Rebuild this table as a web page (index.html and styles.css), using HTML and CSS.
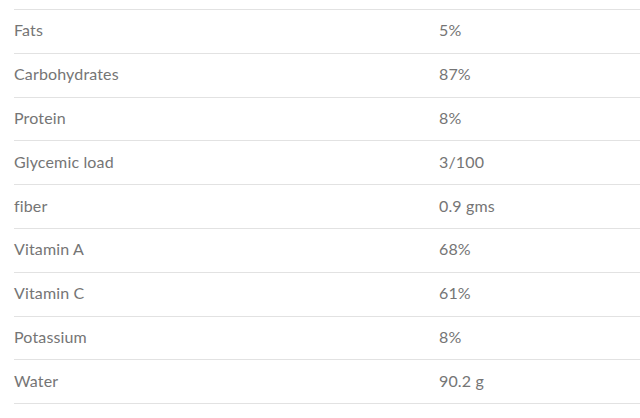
FILE: index.html
```html
<!DOCTYPE html>
<html>
<head>
<meta charset="utf-8">
<link rel="stylesheet" href="styles.css">
</head>
<body>
<div class="facts">
  <div class="row"><div class="label">Fats</div><div class="value">5%</div></div>
  <div class="row"><div class="label">Carbohydrates</div><div class="value">87%</div></div>
  <div class="row"><div class="label">Protein</div><div class="value">8%</div></div>
  <div class="row"><div class="label">Glycemic load</div><div class="value">3/100</div></div>
  <div class="row"><div class="label">fiber</div><div class="value">0.9 gms</div></div>
  <div class="row"><div class="label">Vitamin A</div><div class="value">68%</div></div>
  <div class="row"><div class="label">Vitamin C</div><div class="value">61%</div></div>
  <div class="row"><div class="label">Potassium</div><div class="value">8%</div></div>
  <div class="row"><div class="label">Water</div><div class="value">90.2 g</div></div>
</div>
</body>
</html>
```
FILE: styles.css
```css
html, body {
  margin: 0;
  padding: 0;
  background: #fff;
}
body {
  padding: 9px 0 0 14px;
  font-family: Lato, "Open Sans", sans-serif;
  font-size: 16px;
  letter-spacing: 0.15px;
  color: #757575;
}
.facts {
  border-top: 1px solid #e2e2e2;
}
.row {
  display: flex;
  align-items: center;
  height: 43.8px;
  padding-bottom: 3px;
  box-sizing: border-box;
  border-bottom: 1px solid #e2e2e2;
}
.label {
  width: 425px;
}
.value {
  flex: 1;
}
```
